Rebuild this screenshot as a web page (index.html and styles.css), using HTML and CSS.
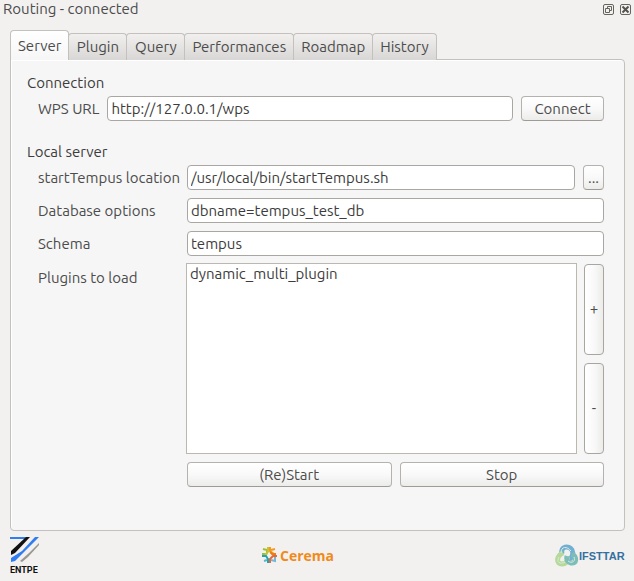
FILE: index.html
```html
<!DOCTYPE html>
<html lang="en">
<head>
<meta charset="utf-8">
<title>Routing - connected</title>
<meta name="viewport" content="width=device-width, initial-scale=1">
<link rel="stylesheet" href="styles.css">
</head>
<body>
<header class="titlebar">
  <h1 class="title">Routing - connected</h1>
  <button class="dock-btn" type="button" aria-label="Float">
    <svg width="11" height="11" viewBox="0 0 11 11"><g fill="none" stroke="#66645f"><rect x=".5" y=".5" width="10" height="10" rx="1.5"/><path d="M4.500 4.500V2.500H8.500V6.500H6.500M2.500 4.500H6.500V8.500H2.500Z"/></g></svg>
  </button>
  <button class="dock-btn" type="button" aria-label="Close">
    <svg width="11" height="11" viewBox="0 0 11 11"><g fill="none" stroke="#66645f"><rect x=".5" y=".5" width="10" height="10" rx="1.500"/><path stroke="#55534f" stroke-width="2" d="M2.500 2.500L8.500 8.500M8.500 2.500L2.500 8.500"/></g></svg>
  </button>
</header>
<main class="dock">
  <div class="tabs" role="tablist">
    <button class="tab active" role="tab" aria-selected="true" type="button">Server</button>
    <button class="tab" role="tab" type="button">Plugin</button>
    <button class="tab" role="tab" type="button">Query</button>
    <button class="tab" role="tab" type="button">Performances</button>
    <button class="tab" role="tab" type="button">Roadmap</button>
    <button class="tab" role="tab" type="button">History</button>
  </div>
  <form class="panel">
    <h2 class="group-title">Connection</h2>
    <div class="row connection">
      <label for="wps">WPS URL</label>
      <input class="field" id="wps" type="text" value="http://127.0.0.1/wps">
      <button class="btn connect" type="button">Connect</button>
    </div>
    <h2 class="group-title local">Local server</h2>
    <div class="settings">
      <label for="location">startTempus location</label>
      <div class="row">
        <input class="field" id="location" type="text" value="/usr/local/bin/startTempus.sh">
        <button class="btn browse" type="button">...</button>
      </div>
      <label for="database">Database options</label>
      <input class="field" id="database" type="text" value="dbname=tempus_test_db">
      <label for="schema">Schema</label>
      <input class="field" id="schema" type="text" value="tempus">
      <label class="plugins-label" for="plugins">Plugins to load</label>
      <div class="row plugins">
        <select class="list" id="plugins" multiple><option>dynamic_multi_plugin</option></select>
        <div class="side">
          <button class="btn tall" type="button">+</button>
          <button class="btn tall" type="button">-</button>
        </div>
      </div>
      <div class="row actions">
        <button class="btn" type="button">(Re)Start</button>
        <button class="btn" type="button">Stop</button>
      </div>
    </div>
  </form>
</main>
<footer class="logos">
  <svg width="30" height="39" viewBox="0 0 30 39" role="img" aria-label="ENTPE">
    <path d="M0 1H16L15 3H0Z" fill="#2f7df0"/>
    <path d="M16 1H20L5 17L1 19V15Z" fill="#111"/>
    <path d="M25 1H29L16 14L5 25L1 26V22L12 15Z" fill="#2f7df0"/>
    <path d="M29 7V9L18 21L12 26L10 25L19 17Z" fill="#9b9892"/>
    <text class="entpe" x="0" y="37">ENTPE</text>
  </svg>
  <svg width="74" height="20" viewBox="0 0 74 20" role="img" aria-label="Cerema">
    <g fill="none" stroke-width="2">
      <path d="M2 3L6 4V8H1" stroke="#9bbf3b"/><path d="M7 1V6L4 9" stroke="#c7c52e"/>
      <path d="M9 1V5L13 8M14 3L10 4" stroke="#f39a21"/><path d="M15 8H11L9 6" stroke="#ee7d18"/>
      <path d="M1 10H5L7 13V17" stroke="#21a2b5"/><path d="M3 15L6 14" stroke="#54b9c5"/>
      <path d="M9 17V13L12 10H16" stroke="#e66a35"/><path d="M10 14L14 15V11" stroke="#78b4d4"/>
      <path d="M8 6L10 9L8 12L6 9Z" fill="#f2f1f0" stroke="none"/>
    </g>
    <text class="cerema" x="19" y="15">Cerema</text>
  </svg>
  <svg width="72" height="24" viewBox="0 0 72 24" role="img" aria-label="IFSTTAR">
    <g fill="none" stroke-width="5">
      <path d="M7 10C5 2 14 1 17 6C19 10 17 14 14 15" stroke="#72b0d2"/>
      <path d="M8 9C1 12 1 20 7 20C11 20 13 17 12 13" stroke="#b4d999"/>
      <path d="M17 10C22 13 22 20 16 19C12 18 11 15 12 12" stroke="#7dbdb9"/>
    </g>
    <g fill="none" stroke="#d9ebdf"><path d="M6 9C6 2 12 2 16 7M4 13C1 18 5 21 10 18M19 13C21 17 17 20 13 17"/></g>
    <text class="ifsttar" x="24" y="16">IFSTTAR</text>
  </svg>
</footer>
</body>
</html>
```
FILE: styles.css
```css
* { box-sizing: border-box; }
body {
  margin: 0;
  background: #f2f1f0;
  color: #4c4c4c;
  font: 15px/20px Ubuntu, "Noto Sans", sans-serif;
}
button, input, select { font: inherit; color: inherit; margin: 0; }
.titlebar {
  display: flex;
  align-items: center;
  gap: 6px;
  height: 18px;
  padding: 0 3px;
}
.title { flex: 1; margin: 0; font-size: 15px; font-weight: 400; }
.dock-btn { display: flex; padding: 0; border: 0; background: none; }
.dock { padding: 12px 9px 0 10px; }
.tabs { display: flex; align-items: flex-end; }
.tab {
  height: 27px;
  min-width: 59px;
  margin-right: -1px;
  padding: 0 7px;
  border: 1px solid #c3c0bd;
  border-bottom: 0;
  border-radius: 4px 4px 0 0;
  background: linear-gradient(#f1f0ef, #d9d7d5);
}
.tab.active {
  z-index: 1;
  height: 30px;
  background: linear-gradient(#fff, #f6f6f6);
}
.panel {
  margin-top: -1px;
  padding: 13px 20px 43px 16px;
  border: 1px solid #c3c0bd;
  border-radius: 0 4px 4px 4px;
  background: #f6f6f6;
  box-shadow: inset 1px 1px #fff;
}
.group-title { margin: 0; color: #3c3c3c; font-size: 15px; font-weight: 400; line-height: 20px; }
.local { margin-top: 21px; }
.row { display: flex; gap: 8px; align-items: center; }
.connection { margin-top: 3px; padding-left: 11px; }
.settings {
  display: grid;
  grid-template-columns: 141px 1fr;
  gap: 8px;
  align-items: center;
  margin-top: 3px;
  padding-left: 11px;
}
label { white-space: nowrap; }
.field {
  flex: 1;
  min-width: 0;
  height: 25px;
  padding: 0 3px;
  border: 1px solid #aaa6a1;
  border-radius: 4px;
  background: #fff;
  color: #3c3c3c;
}
.btn {
  height: 25px;
  padding: 0;
  border: 1px solid #b5b2ae;
  border-bottom-color: #9e9b97;
  border-radius: 4px;
  background: linear-gradient(#fff, #f9f9f9 50%, #edeceb);
}
.connect { width: 83px; }
.browse { width: 21px; }
.plugins-label { align-self: start; padding-top: 4px; }
.plugins { gap: 7px; margin: -1px 0 0 -1px; }
.list {
  flex: 1;
  min-width: 0;
  height: 191px;
  padding: 0;
  border: 1px solid #bbb8b0;
  border-radius: 0;
  outline: 0;
  background: #fff;
  color: #3c3c3c;
}
.list option { min-height: 20px; padding: 1px 3px; }
.side { display: flex; flex-direction: column; gap: 8px; width: 20px; }
.tall {
  height: 91px;
  border-color: #a9a6a2;
  background: linear-gradient(90deg, #fff, #f9f9f9 50%, #edeceb);
}
.actions { grid-column: 2; }
.actions .btn { flex: 1; }
.logos {
  display: flex;
  justify-content: space-between;
  align-items: center;
  padding: 5px 7px 5px 10px;
}
.logos svg { display: block; }
.entpe { font: bold 9px Roboto, sans-serif; fill: #111; }
.cerema { font: bold 14px "Open Sans", sans-serif; fill: #f18a1b; }
.ifsttar { font: bold 11px "Liberation Sans", sans-serif; fill: #34709f; }
```
